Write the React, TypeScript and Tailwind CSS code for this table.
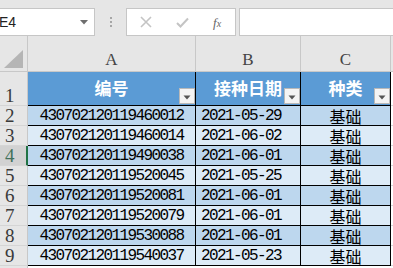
import { ReactNode } from 'react';

type Row = { id: string; date: string; kind: string };

const rows: Row[] = [
  { id: '430702120119460012', date: '2021-05-29', kind: '基础' },
  { id: '430702120119460014', date: '2021-06-02', kind: '基础' },
  { id: '430702120119490038', date: '2021-06-01', kind: '基础' },
  { id: '430702120119520045', date: '2021-05-25', kind: '基础' },
  { id: '430702120119520081', date: '2021-06-01', kind: '基础' },
  { id: '430702120119520079', date: '2021-06-01', kind: '基础' },
  { id: '430702120119530088', date: '2021-06-01', kind: '基础' },
  { id: '430702120119540037', date: '2021-05-23', kind: '基础' },
];

const serif = "font-['Liberation_Serif',serif]";
const cjk = "font-['Noto_Sans_CJK_SC',sans-serif]";
const mono = "font-['Liberation_Mono',monospace]";

const FilterButton = () => (
  <div className="absolute right-0 bottom-px w-4 h-4 bg-[#f4f4f4] border border-[#b9b9b9] flex items-center justify-center">
    <svg width="8" height="5" viewBox="0 0 8 5" className="mt-[3px]">
      <path d="M0.5 0.5 L7.5 0.5 L4 4.5 Z" fill="#555" />
    </svg>
  </div>
);

const RowHead = ({ n, active, h }: { n?: number; active?: boolean; h: string }) => (
  <div
    className={`${h} flex items-end pl-[5px] border-b border-[#d5d5d5] ${serif} text-[19px] leading-5 ${
      active
        ? 'bg-[#d2d2d2] text-[#42715a] border-r-2 border-r-[#217346]'
        : 'bg-[#e6e6e6] text-[#3a3a3a] border-r border-r-[#c8c8c8]'
    }`}
  >
    {n && <span className="mb-[-1px]">{n}</span>}
  </div>
);

const Cell = ({ children, className }: { children?: ReactNode; className: string }) => (
  <div className={`flex items-center justify-center border-r border-b border-black text-black leading-none ${className}`}>
    {children}
  </div>
);

export default function App() {
  return (
    <div className="w-[393px] h-[268px] overflow-hidden bg-white flex flex-col">
      {/* formula bar */}
      <div className="h-9 shrink-0 bg-[#e6e6e6] flex items-start pt-2 overflow-hidden">
        <div className="-ml-[10px] w-[105px] h-[28px] bg-white border border-[#c6c6c6] flex items-center justify-between pl-2 pr-[6px]">
          <span className="font-['Liberation_Sans',sans-serif] text-[14px] text-[#222]">E4</span>
          <svg width="8" height="5" viewBox="0 0 8 5">
            <path d="M0 0 L8 0 L4 4.5 Z" fill="#6e6e6e" />
          </svg>
        </div>
        <div className="w-[31px] h-[28px] flex flex-col items-center justify-center gap-[2px]">
          <span className="w-[2px] h-[2px] bg-[#a6a6a6]" />
          <span className="w-[2px] h-[2px] bg-[#a6a6a6]" />
          <span className="w-[2px] h-[2px] bg-[#a6a6a6]" />
        </div>
        <div className="w-[110px] h-[28px] bg-white border border-[#c6c6c6] flex items-center pl-[13px] gap-[24px]">
          <svg width="12" height="12" viewBox="0 0 12 12">
            <path d="M1 1 L11 11 M11 1 L1 11" stroke="#c4c4c4" strokeWidth="1.6" />
          </svg>
          <svg width="13" height="11" viewBox="0 0 13 11">
            <path d="M1 6 L4.5 9.5 L12 1.5" stroke="#c4c4c4" strokeWidth="2" fill="none" />
          </svg>
          <span className={`${serif} italic text-[13px] text-[#666] leading-none`}>
            f<span className="text-[10px]">x</span>
          </span>
        </div>
        <div className="ml-[3px] flex-1 h-[28px] bg-white border border-[#c6c6c6] border-r-0" />
      </div>

      {/* sheet */}
      <div className="grid grid-cols-[28px_168px_105px_90px_1fr]">
        {/* column letters */}
        <div className="h-9 bg-[#e6e6e6] border-r border-b border-[#c8c8c8] flex items-end justify-end pr-[4px] pb-[3px]">
          <svg width="19" height="18" viewBox="0 0 19 18">
            <path d="M19 0 L19 18 L0 18 Z" fill="#b5b5b5" />
          </svg>
        </div>
        {['A', 'B', 'C', ''].map((c, i) => (
          <div
            key={i}
            className={`h-9 bg-[#e6e6e6] border-b border-[#c8c8c8] ${i < 3 ? 'border-r' : ''} flex items-end justify-center pb-[3px] ${serif} text-[17px] leading-none text-[#444]`}
          >
            {c}
          </div>
        ))}

        {/* header row */}
        <RowHead n={1} h="h-[34px]" />
        {['编号', '接种日期', '种类'].map(t => (
          <div
            key={t}
            className={`relative h-[34px] bg-[#5b9bd5] border-r border-b border-black flex items-center justify-center pb-px ${cjk} text-[17px] font-bold text-white`}
          >
            {t}
            <FilterButton />
          </div>
        ))}
        <div className="h-[34px] border-b border-[#d9d9d9]" />

        {rows.map((r, i) => {
          const bg = i % 2 === 0 ? 'bg-[#bdd7ee]' : 'bg-[#ddebf7]';
          return (
            <div key={r.id} className="contents">
              <RowHead n={i + 2} active={i === 2} h="h-5" />
              <Cell className={`h-5 ${bg} ${mono} text-[16px] tracking-[-1.6px]`}>{r.id}</Cell>
              <Cell className={`h-5 ${bg} ${mono} text-[16px] tracking-[-1.6px] justify-start pl-[5px]`}>{r.date}</Cell>
              <Cell className={`h-5 ${bg} ${cjk} text-[16px]`}>{r.kind}</Cell>
              <div className="h-5 border-b border-[#d9d9d9]" />
            </div>
          );
        })}
        <RowHead h="h-5" />
      </div>
    </div>
  );
}
